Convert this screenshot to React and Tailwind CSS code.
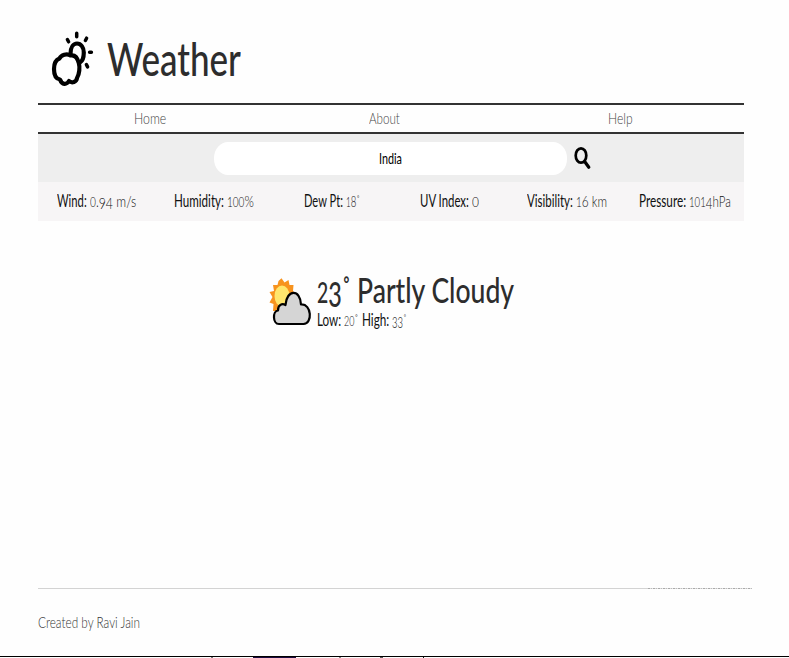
import { useLayoutEffect, useRef, useState } from "react";

// Old-style figures: 0-2 sit at x-height, 3, 4, 5, 7 and 9 hang below the baseline.
function Figures({ text }) {
  return text.split("").map((c, i) => {
    if ("012".includes(c)) return <span key={i} className="text-[0.83em] leading-[0]">{c}</span>;
    if ("34579".includes(c)) return <span key={i} className="relative top-[0.12em] leading-[0]">{c}</span>;
    return c;
  });
}

// Condenses its text horizontally to the given width.
function Fit({ width, className = "", children }) {
  const ref = useRef(null);
  const [scale, setScale] = useState(1);
  useLayoutEffect(() => {
    setScale(width / ref.current.offsetWidth);
  }, [width]);
  return (
    <span className={"inline-flex shrink-0 justify-start whitespace-pre " + className} style={{ width }}>
      <span ref={ref} className="block shrink-0 origin-left" style={{ transform: `scaleX(${scale})` }}>
        {children}
      </span>
    </span>
  );
}

const stats = [
  ["Wind:", 30, "0.94 m/s", 46],
  ["Humidity:", 50, "100%", 27],
  ["Dew Pt:", 39, "18˚", 14],
  ["UV Index:", 49, "0", 7],
  ["Visibility:", 46, "16 km", 31],
  ["Pressure:", 47, "1014hPa", 42],
];

function Logo() {
  return (
    <svg className="h-[60px] w-[46px]" viewBox="0 0 46 60" fill="none" stroke="#000" strokeWidth="4.2" strokeLinecap="round" strokeLinejoin="round">
      <path d="M20.500 25C20.500 18 23.500 14.500 27 14.500C31 14.500 33.800 18.500 33.800 23.500C33.800 28 32.500 32 30 33.500" />
      <path d="M20.500 26.500C17 24 11 26 9.500 29.500C5.500 31 4 36 4 40C4 46 6 50 10 50.500C12 56 16.500 56 19 52C22 54.500 26.500 53 27 49C29.500 45 30 38 28.800 34C27.500 29 25 25.500 20.500 26.500Z" />
      <path d="M26.700 4.200v3.600M17.400 10.500l1.200 2.300M36.600 9.200l-1.200 2.300M39.600 23.300h1.800M36.400 35.600l1.200 2.300" strokeWidth="3.500" />
    </svg>
  );
}

function PartlyCloudy() {
  return (
    <svg className="h-[50px] w-[44px]" viewBox="0 0 44 50">
      <path fill="#f7931e" d="M12.500 1.200L15.500 5.500L19.500 3L20.500 8L24.500 8L24 14L28 18L25 22L27 28L22 29L19 35L14 33L10 39L8 34L4 34L4.500 27L0.500 25.500L3.500 20L0.500 15L5 14L4 8L8.500 8L9.500 4Z" />
      <ellipse cx="13" cy="19" rx="7.500" ry="10.500" fill="#ffe66d" />
      <path d="M10 47C3.500 47 3.500 34 9 33.500C9 28 13 26 16.500 28C17.500 12 31.500 12 32 27.500C42.800 26.500 43.800 47 34.500 47Z" fill="#d5d5d5" stroke="#000" strokeWidth="2.200" strokeLinejoin="round" />
    </svg>
  );
}

export default function App() {
  return (
    <div className="flex h-[658px] w-[789px] flex-col overflow-hidden bg-[#fefefe] font-[Lato,'Open_Sans',sans-serif] text-[16.5px] text-[#111]">
      <header className="flex h-[103px] shrink-0 pt-[29px] pl-[50px]">
        <Logo />
        <h1 className="ml-[11px] text-[46px] leading-[59px] font-medium text-[#2d2d2d]">
          <Fit width={134}>Weather</Fit>
        </h1>
      </header>
      <nav className="ml-[38px] h-[31px] w-[706px] shrink-0 border-y-2 border-[#333] font-light text-[#444]">
        <div className="-ml-[6px] grid h-[27px] w-[706px] grid-cols-3 justify-items-center leading-[26px]">
          <Fit width={32}>Home</Fit>
          <Fit width={31}>About</Fit>
          <Fit width={25}>Help</Fit>
        </div>
      </nav>
      <div className="ml-[38px] flex h-[48px] w-[706px] shrink-0 bg-[#eeeeee] pt-[8px] pl-[176px]">
        <div className="flex h-[33px] w-[353px] justify-center rounded-[14px/16px] bg-white text-[15px] leading-[32px] text-black">
          <Fit width={23}>India</Fit>
        </div>
        <svg className="mt-[4px] ml-[7px] h-[26px] w-[18px]" viewBox="0 0 18 26" fill="none" stroke="#000">
          <ellipse cx="7" cy="9.500" rx="5.300" ry="7.200" strokeWidth="2.700" />
          <path d="M11 16L14.800 21.300" strokeWidth="3.200" strokeLinecap="round" />
        </svg>
      </div>
      <section className="ml-[38px] grid h-[39px] w-[706px] shrink-0 grid-cols-6 bg-[#f7f5f6] leading-[39px]">
        {stats.map(([label, lw, value, vw]) => (
          <div key={label} className="flex justify-center gap-[3px]">
            <Fit width={lw}>{label}</Fit>
            <Fit width={vw} className="font-light"><Figures text={value} /></Fit>
          </div>
        ))}
      </section>
      <main className="flex h-[367px] shrink-0 pt-[56px] pl-[269px]">
        <PartlyCloudy />
        <div className="ml-[4px]">
          <h2 className="flex h-[32px] text-[35px] leading-[24px] font-medium text-[#2d2d2d]">
            <Fit width={34} className="mr-[6px]"><Figures text="23˚" /></Fit>
            <Fit width={157}>Partly Cloudy</Fit>
          </h2>
          <div className="flex gap-[3px] leading-[23px]">
            <Fit width={24}>Low:</Fit>
            <Fit width={15} className="font-light"><Figures text="20˚" /></Fit>
            <Fit width={27}>High:</Fit>
            <Fit width={15} className="font-light"><Figures text="33˚" /></Fit>
          </div>
        </div>
      </main>
      <footer className="flex h-[70px] shrink-0 flex-col pl-[38px] font-light text-[#333]">
        <div className="flex h-px">
          <div className="h-px w-[610px] bg-[#d3d3d3]" />
          <div className="h-px w-[104px] bg-[repeating-linear-gradient(90deg,#aaa_0_2px,#ddd_2px_3px,#bbb_3px_4px,#e6e6e6_4px_5px)]" />
        </div>
        <p className="mt-[20px] leading-[27px]">
          <Fit width={102}>Created by Ravi Jain</Fit>
        </p>
      </footer>
      <div className="-mt-[2px] h-px shrink-0 bg-black" />
      <div className="flex h-px shrink-0 pl-[211px]">
        <div className="mr-[40px] h-px w-[2px] bg-[#777]" />
        <div className="h-px w-[43px] bg-[#1c0a3c]" />
        <div className="ml-[43px] h-px w-[2px] bg-[#888]" />
        <div className="ml-[39px] h-px w-[3px] bg-[#555]" />
        <div className="ml-[40px] h-px w-px bg-[#111]" />
      </div>
    </div>
  );
}
